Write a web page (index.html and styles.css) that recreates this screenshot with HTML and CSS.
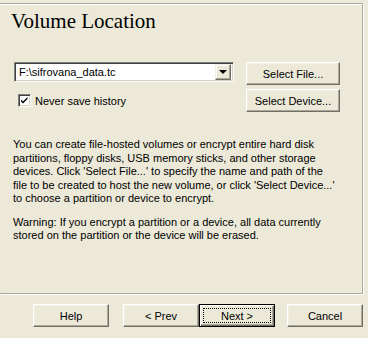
FILE: index.html
```html
<!DOCTYPE html>
<html lang="en">
<head>
    <meta charset="UTF-8">
    <title>Volume Location</title>
    <link rel="stylesheet" href="styles.css">
</head>
<body>

<div class="panel">
    <h1 class="page-title">Volume Location</h1>

    <div class="location-row">
        <div class="left-col">
            <div class="combo">
                <span class="combo-text">F:\sifrovana_data.tc</span>
                <span class="combo-btn"><span class="arrow"></span></span>
            </div>
            <label class="check-row">
                <span class="checkbox">
                    <svg width="9" height="9" viewBox="0 0 9 9"><path d="M1 3.5 L3 5.5 L7.5 1 L7.5 3 L3 7.5 L1 5.5 Z" fill="#000"/></svg>
                </span>
                Never save history
            </label>
        </div>
        <div class="right-col">
            <button class="btn side-btn">Select File...</button>
            <button class="btn side-btn">Select Device...</button>
        </div>
    </div>

    <p class="info">You can create file-hosted volumes or encrypt entire hard disk<br>
    partitions, floppy disks, USB memory sticks, and other storage<br>
    devices. Click 'Select File...' to specify the name and path of the<br>
    file to be created to host the new volume, or click 'Select Device...'<br>
    to choose a partition or device to encrypt.</p>

    <p class="info">Warning: If you encrypt a partition or a device, all data currently<br>
    stored on the partition or the device will be erased.</p>
</div>

<div class="footer">
    <button class="btn foot-btn">Help</button>
    <div class="nav-pair">
        <button class="btn foot-btn">&lt; Prev</button>
        <button class="btn foot-btn default"><span class="focus">Next &gt;</span></button>
    </div>
    <button class="btn foot-btn">Cancel</button>
</div>

</body>
</html>
```

FILE: styles.css
```css
body {
    margin: 0;
    background-color: #ece9d8;
    font-family: 'Liberation Sans', Arial, sans-serif;
    font-size: 11px;
    color: #000;
    width: 368px;
    height: 338px;
    overflow: hidden;
}

/* etched frame around the wizard page */
.panel {
    box-sizing: border-box;
    width: 363px;
    height: 291px;
    margin-top: 3px;
    border-top: 1px solid #aca899;
    border-right: 1px solid #aca899;
    border-bottom: 1px solid #aca899;
    box-shadow: 1px 1px 0 #fff, inset 0 1px 0 #fff;
    padding: 0 0 0 11px;
}

.page-title {
    margin: 0;
    padding-top: 5px;
    font-family: "Liberation Serif", "Times New Roman", serif;
    font-weight: normal;
    font-size: 21px;
    line-height: 24px;
}

.location-row {
    display: flex;
    margin-top: 29px;
}

.left-col {
    width: 222px;
    padding-left: 3px;
}

.combo {
    box-sizing: border-box;
    display: flex;
    align-items: center;
    width: 220px;
    height: 20px;
    background: #fff;
    border-top: 1px solid #808080;
    border-left: 1px solid #808080;
    border-bottom: 1px solid #fff;
    border-right: 1px solid #fff;
    box-shadow: inset 1px 1px 0 #404040, inset -1px -1px 0 #d4d0c8;
    padding: 2px 2px 2px 4px;
}

.combo-text {
    flex: 1;
    font-size: 11px;
    line-height: 13px;
}

.combo-btn {
    box-sizing: border-box;
    width: 16px;
    height: 16px;
    background: #ece9d8;
    border-top: 1px solid #f1efe2;
    border-left: 1px solid #f1efe2;
    border-right: 1px solid #716f64;
    border-bottom: 1px solid #716f64;
    box-shadow: inset -1px -1px 0 #aca899, inset 1px 1px 0 #fff;
    display: flex;
    align-items: center;
    justify-content: center;
}

.arrow {
    width: 0;
    height: 0;
    border-left: 4px solid transparent;
    border-right: 4px solid transparent;
    border-top: 4px solid #000;
}

.check-row {
    display: flex;
    align-items: center;
    gap: 4px;
    margin-top: 12px;
    padding-left: 4px;
}

.checkbox {
    box-sizing: border-box;
    width: 13px;
    height: 13px;
    background: #fff;
    border-top: 1px solid #808080;
    border-left: 1px solid #808080;
    border-bottom: 1px solid #fff;
    border-right: 1px solid #fff;
    box-shadow: inset 1px 1px 0 #404040, inset -1px -1px 0 #d4d0c8;
    display: flex;
    align-items: center;
    justify-content: center;
}

.right-col {
    display: flex;
    flex-direction: column;
    gap: 4px;
    margin-left: 10px;
}

.btn {
    box-sizing: border-box;
    font-family: 'Liberation Sans', Arial, sans-serif;
    font-size: 11px;
    color: #000;
    background: #ece9d8;
    border-top: 1px solid #fff;
    border-left: 1px solid #fff;
    border-right: 1px solid #716f64;
    border-bottom: 1px solid #716f64;
    box-shadow: inset -1px -1px 0 #aca899, inset 1px 1px 0 #f1efe2;
    padding: 0;
}

.side-btn {
    width: 94px;
    height: 23px;
}

.info {
    margin: 26px 0 0 2px;
    line-height: 13.5px;
}

.info + .info {
    margin-top: 10px;
}

.footer {
    display: flex;
    align-items: center;
    padding: 10px 0 0 33px;
}

.foot-btn {
    width: 76px;
    height: 23px;
}

.nav-pair {
    display: flex;
    margin-left: 14px;
    margin-right: 12px;
}

.default {
    border: 1px solid #000;
    box-shadow: inset 1px 1px 0 #fff, inset -1px -1px 0 #716f64, inset -2px -2px 0 #aca899;
    padding: 3px;
}

.focus {
    display: block;
    height: 100%;
    box-sizing: border-box;
    border: 1px dotted #000;
    line-height: 13px;
    padding-top: 1px;
}
```
